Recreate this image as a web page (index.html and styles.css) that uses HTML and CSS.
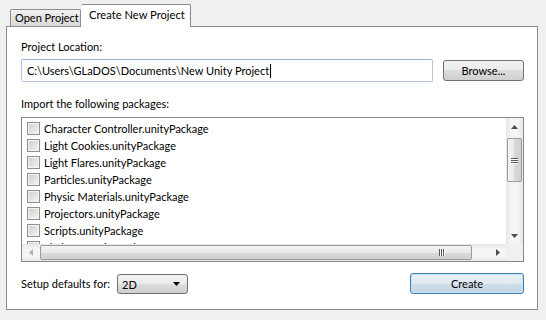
FILE: index.html
```html
<!DOCTYPE html>
<html lang="en">
<head>
  <meta charset="UTF-8">
  <title>Unity - Project Wizard</title>
  <link rel="stylesheet" href="styles.css">
</head>
<body>
  <div class="tabs">
    <div class="tab">Open Project</div>
    <div class="tab active">Create New Project</div>
  </div>

  <div class="panel">
    <label class="label" for="location">Project Location:</label>
    <div class="location-row">
      <div class="textbox" id="location">C:\Users\GLaDOS\Documents\New Unity Project<span class="caret"></span></div>
      <button class="btn browse">Browse...</button>
    </div>

    <div class="label import-label">Import the following packages:</div>
    <div class="listbox">
      <div class="items">
        <div class="item"><span class="check"></span>Character Controller.unityPackage</div>
        <div class="item"><span class="check"></span>Light Cookies.unityPackage</div>
        <div class="item"><span class="check"></span>Light Flares.unityPackage</div>
        <div class="item"><span class="check"></span>Particles.unityPackage</div>
        <div class="item"><span class="check"></span>Physic Materials.unityPackage</div>
        <div class="item"><span class="check"></span>Projectors.unityPackage</div>
        <div class="item"><span class="check"></span>Scripts.unityPackage</div>
        <div class="item"><span class="check"></span>Skyboxes.unityPackage</div>
      </div>

      <div class="vscroll">
        <div class="arrow">
          <svg width="7" height="4" viewBox="0 0 7 4"><polygon points="3.5,0 7,4 0,4" fill="#4d4d4d"/></svg>
        </div>
        <div class="vthumb">
          <span class="grip"></span><span class="grip"></span><span class="grip"></span>
        </div>
        <div class="spacer"></div>
        <div class="arrow">
          <svg width="7" height="4" viewBox="0 0 7 4"><polygon points="0,0 7,0 3.5,4" fill="#4d4d4d"/></svg>
        </div>
      </div>

      <div class="hscroll">
        <div class="arrow">
          <svg width="4" height="7" viewBox="0 0 4 7"><polygon points="4,0 4,7 0,3.5" fill="#b0b0b0"/></svg>
        </div>
        <div class="hthumb">
          <span class="grip"></span><span class="grip"></span><span class="grip"></span>
        </div>
        <div class="arrow">
          <svg width="4" height="7" viewBox="0 0 4 7"><polygon points="0,0 4,3.5 0,7" fill="#4d4d4d"/></svg>
        </div>
      </div>
      <div class="corner"></div>
    </div>

    <div class="bottom-row">
      <span class="setup-label">Setup defaults for:</span>
      <div class="combo">
        <span>2D</span>
        <svg width="7" height="4" viewBox="0 0 7 4"><polygon points="0,0 7,0 3.5,4" fill="#000"/></svg>
      </div>
      <button class="btn create">Create</button>
    </div>
  </div>
</body>
</html>
```

FILE: styles.css
```css
body {
  margin: 0;
  background-color: #f0f0f0;
  color: #000;
  font-family: Lato, "Liberation Sans", sans-serif;
  font-size: 11px;
  width: 546px;
  height: 320px;
  overflow: hidden;
}

/* tabs */
.tabs {
  display: flex;
  align-items: flex-end;
  height: 26px;
  padding-left: 10px;
  position: relative;
  z-index: 1;
}

.tab {
  box-sizing: border-box;
  height: 17px;
  width: 71px;
  padding-left: 4px;
  line-height: 16px;
  white-space: nowrap;
  border: 1px solid #898c95;
  border-bottom: none;
  border-radius: 2px 2px 0 0;
  background: linear-gradient(#f2f2f2, #e3e3e3 50%, #d9d9d9);
}

.tab.active {
  height: 23px;
  width: 110px;
  margin-bottom: -1px;
  padding-left: 8px;
  line-height: 19px;
  font-size: 11.2px;
  background: #fff;
  border-left: none;
}

/* main panel */
.panel {
  box-sizing: border-box;
  width: 532px;
  height: 284px;
  margin-left: 6px;
  padding: 12px 13px 0 14px;
  background-color: #fff;
  border: 1px solid #898c95;
}

.label {
  display: block;
  height: 16px;
  line-height: 16px;
  white-space: nowrap;
}

.location-row {
  display: flex;
  align-items: center;
  margin-top: 4px;
}

.textbox {
  box-sizing: border-box;
  flex: 1;
  height: 23px;
  padding-left: 5px;
  line-height: 21px;
  border: 1px solid #b3c7dc;
  border-top-color: #9fb6ce;
  border-radius: 2px;
  white-space: nowrap;
}

.caret {
  display: inline-block;
  width: 1px;
  height: 14px;
  margin-left: 1px;
  background-color: #000;
  vertical-align: -3px;
}

.btn {
  box-sizing: border-box;
  font-family: inherit;
  font-size: 11px;
  color: #000;
  border: 1px solid #707070;
  border-radius: 3px;
  background: linear-gradient(#f2f2f2, #ebebeb 50%, #dddddd 50%, #cfcfcf);
  padding: 0;
}

.browse {
  width: 81px;
  height: 21px;
  margin-left: 10px;
}

.import-label {
  margin-top: 14px;
}

/* package list */
.listbox {
  box-sizing: border-box;
  height: 145px;
  margin-top: 5px;
  border: 1px solid #828790;
  display: grid;
  grid-template-columns: 1fr 17px;
  grid-template-rows: 1fr 17px;
}

.items {
  overflow: hidden;
  padding-top: 2px;
}

.item {
  display: flex;
  align-items: center;
  height: 17px;
  padding-left: 5px;
  white-space: nowrap;
}

.check {
  box-sizing: border-box;
  width: 13px;
  height: 13px;
  margin-right: 4px;
  border: 1px solid #8e8f8f;
  background: linear-gradient(135deg, #cfcfcf, #f4f4f4);
  box-shadow: inset 0 0 0 1px #f4f4f4;
}

.vscroll {
  display: flex;
  flex-direction: column;
  background: linear-gradient(90deg, #e6e6e6, #f5f5f5 30%, #f5f5f5 70%, #e6e6e6);
}

.hscroll {
  display: flex;
  background: linear-gradient(#e6e6e6, #f5f5f5 30%, #f5f5f5 70%, #e6e6e6);
}

.arrow {
  flex: none;
  width: 17px;
  height: 17px;
  display: flex;
  align-items: center;
  justify-content: center;
}

.spacer {
  flex: 1;
}

.vthumb {
  box-sizing: border-box;
  height: 44px;
  margin: 3px 1px 0;
  border: 1px solid #9a9a9a;
  border-radius: 2px;
  background: linear-gradient(90deg, #f3f3f3, #e8e8e8 50%, #d9d9d9 50%, #d0d0d0);
  display: flex;
  flex-direction: column;
  align-items: center;
  justify-content: center;
  gap: 1px;
}

.vthumb .grip {
  width: 7px;
  height: 1px;
  background-color: #5a5a5a;
  box-shadow: 0 1px 0 #fff;
}

.hthumb {
  box-sizing: border-box;
  flex: 1;
  margin: 1px 17px 1px 1px;
  border: 1px solid #9a9a9a;
  border-radius: 2px;
  background: linear-gradient(#f3f3f3, #e8e8e8 50%, #d9d9d9 50%, #d0d0d0);
  display: flex;
  align-items: center;
  justify-content: flex-end;
  padding-right: 27px;
  gap: 1px;
}

.hthumb .grip {
  width: 1px;
  height: 7px;
  background-color: #5a5a5a;
  box-shadow: 1px 0 0 #fff;
}

.corner {
  background-color: #f0f0f0;
}

/* bottom row */
.bottom-row {
  display: flex;
  align-items: center;
  margin-top: 10px;
}

.setup-label {
  width: 96px;
  white-space: nowrap;
}

.combo {
  box-sizing: border-box;
  width: 71px;
  height: 20px;
  display: flex;
  align-items: center;
  justify-content: space-between;
  padding: 0 7px 0 4px;
  border: 1px solid #707070;
  border-radius: 3px;
  background: linear-gradient(#f2f2f2, #ebebeb 50%, #dddddd 50%, #cfcfcf);
  margin-top: 2px;
}

.create {
  width: 114px;
  height: 21px;
  margin-left: auto;
  border-color: #3c7fb1;
  background: linear-gradient(#eaf1f6, #dfe9f1 50%, #cfdeea 50%, #c3d6e6);
  box-shadow: inset 0 0 0 1px #c6e6f8;
}
```
